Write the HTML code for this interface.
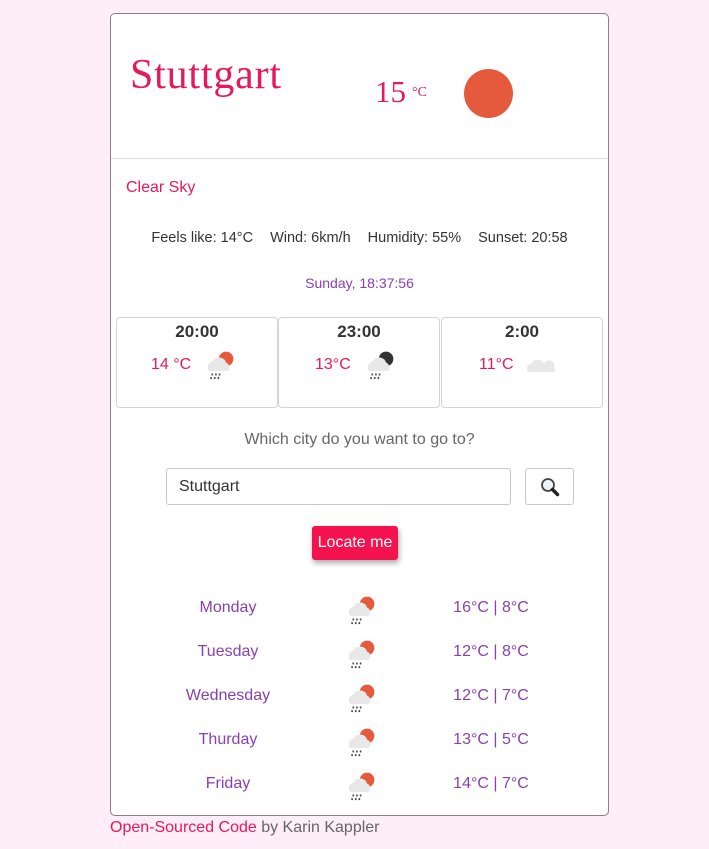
<!DOCTYPE html>
<html><head><meta charset="utf-8"><style>
*{box-sizing:border-box;margin:0;padding:0}
body{width:709px;height:849px;background:#fdeef8;font-family:"Liberation Sans",sans-serif;position:relative;overflow:hidden}
.card{position:absolute;left:110px;top:13px;width:499px;height:803px;background:#fff;border:1px solid #8a7f88;border-radius:5px}
.abs{position:absolute}
.city{left:19px;top:37px;font-family:"Liberation Serif",serif;font-size:42px;color:#e8195a;letter-spacing:0.8px}
.temp{left:264px;top:60px;font-family:"Liberation Serif",serif;font-size:31px;color:#e8195a}
.temp small{font-size:14px;margin-left:6px;vertical-align:6px}
.sun{left:353px;top:55px;width:49px;height:49px;border-radius:50%;background:#e55a3c}
.hr{left:0;top:144px;width:497px;border-top:1px solid #ddd}
.desc{left:15px;top:165px;font-size:16px;color:#e8195a}
.info{left:0;width:497px;top:216px;text-align:center;font-size:14.5px;color:#333}
.info span{margin:0 8.5px}
.date{left:0;width:497px;top:261px;text-align:center;font-size:14px;color:#8a3fb0}
.box{top:303px;width:162px;height:91px;border:1px solid #d5d5d5;border-radius:4px;text-align:center}
.box b{display:block;margin-top:4px;font-size:17px;color:#333}
.box .t{position:absolute;top:38px;font-size:16px;color:#e8195a}
.box svg{position:absolute;top:33px}
.q{left:0;width:497px;top:417px;text-align:center;font-size:16px;color:#666}
.inp{left:55px;top:454px;width:345px;height:37px;border:1px solid #c8c8c8;border-radius:3px;font-size:16px;color:#333;padding:9px 12px}
.srch{left:414px;top:454px;width:49px;height:37px;border:1px solid #c8c8c8;border-radius:3px}
.btn{left:201px;top:512px;width:86px;height:34px;background:#f4134f;color:#fff;border-radius:3px;font-size:16px;text-align:center;line-height:34px;box-shadow:1px 3px 6px rgba(0,0,0,.35)}
.row{left:0;width:497px;font-size:16px;color:#8a3fb0}
.row .d{position:absolute;left:57px;width:120px;text-align:center}
.row .r{position:absolute;left:320px;width:120px;text-align:center}
.row svg{position:absolute;left:233px;top:-6px}
.foot{position:absolute;left:110px;top:819px;font-size:16px;color:#666}
.foot span{color:#e8195a}
</style></head><body>
<svg width="0" height="0" style="position:absolute"><defs>
<g id="cl"><path d="M5 19a5 5 0 0 1 3-8a6 6 0 0 1 11 1a4 4 0 0 1 1 7z" fill="#e8e8e8"/><g fill="#444"><rect x="7" y="21" width="1.3" height="1.6"/><rect x="10" y="21" width="1.3" height="1.6"/><rect x="13" y="21" width="1.3" height="1.6"/><rect x="6" y="24" width="1.3" height="1.6"/><rect x="9" y="24" width="1.3" height="1.6"/><rect x="12" y="24" width="1.3" height="1.6"/></g></g>
<g id="rain"><circle cx="19" cy="9" r="6" fill="#e55a3c"/><use href="#cl"/></g>
</defs></svg>
<div class="card">
<div class="abs city">Stuttgart</div>
<div class="abs temp">15<small>°C</small></div>
<div class="abs sun"></div>
<div class="abs hr"></div>
<div class="abs desc">Clear Sky</div>
<div class="abs info"><span>Feels like: 14°C</span><span>Wind: 6km/h</span><span>Humidity: 55%</span><span>Sunset: 20:58</span></div>
<div class="abs date">Sunday, 18:37:56</div>
<div class="abs box" style="left:5px"><b>20:00</b><span class="t" style="left:34px">14 °C</span><svg style="left:86px;top:30px" width="34" height="34" viewBox="0 0 28 28"><use href="#rain"/></svg></div>
<div class="abs box" style="left:167px"><b>23:00</b><span class="t" style="left:36px">13°C</span><svg style="left:84px;top:30px" width="34" height="34" viewBox="0 0 28 28"><circle cx="19" cy="9" r="6" fill="#333"/><use href="#cl"/></svg></div>
<div class="abs box" style="left:330px"><b>2:00</b><span class="t" style="left:37px">11°C</span><svg style="left:82px;top:30px" width="34" height="34" viewBox="0 0 34 30"><path d="M4 22a5 5 0 0 1 3-8a7 7 0 0 1 13 0a4 4 0 0 1 10 3a3 3 0 0 1-1 5z" fill="#e8e8e8"/></svg></div>
<div class="abs q">Which city do you want to go to?</div>
<div class="abs inp">Stuttgart</div>
<div class="abs srch"><svg width="49" height="37"><circle cx="22" cy="16" r="6" fill="#eef4f8" stroke="#444" stroke-width="1.8"/><path d="M26.5 20.5l5 5" stroke="#222" stroke-width="3.5" stroke-linecap="round"/></svg></div>
<div class="abs btn">Locate me</div>
<div class="abs row" style="top:585px"><span class="d">Monday</span><svg width="34" height="34" viewBox="0 0 28 28"><use href="#rain"/></svg><span class="r">16°C | 8°C</span></div>
<div class="abs row" style="top:629px"><span class="d">Tuesday</span><svg width="34" height="34" viewBox="0 0 28 28"><use href="#rain"/></svg><span class="r">12°C | 8°C</span></div>
<div class="abs row" style="top:673px"><span class="d">Wednesday</span><svg width="34" height="34" viewBox="0 0 28 28"><use href="#rain"/></svg><span class="r">12°C | 7°C</span></div>
<div class="abs row" style="top:717px"><span class="d">Thurday</span><svg width="34" height="34" viewBox="0 0 28 28"><use href="#rain"/></svg><span class="r">13°C | 5°C</span></div>
<div class="abs row" style="top:761px"><span class="d">Friday</span><svg width="34" height="34" viewBox="0 0 28 28"><use href="#rain"/></svg><span class="r">14°C | 7°C</span></div>
</div>
<div class="foot"><span>Open-Sourced Code</span> by Karin Kappler</div>
</body></html>
